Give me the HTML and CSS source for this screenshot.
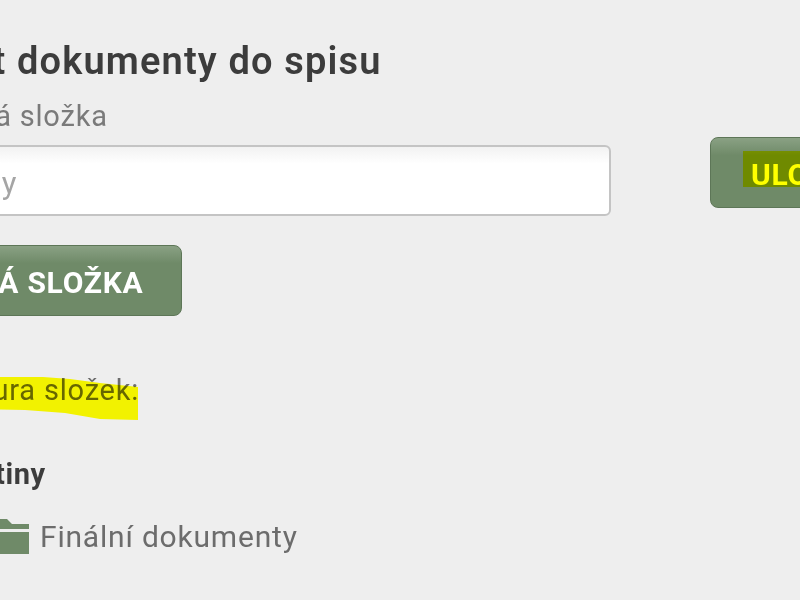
FILE: index.html
```html
<!DOCTYPE html>
<html lang="cs">
<head>
<meta charset="utf-8">
<title>Přidat dokumenty do spisu</title>
<link rel="stylesheet" href="styles.css">
</head>
<body>
<main class="page">
  <div class="row">
    <div class="col">
      <h1 class="title">Přidat dokumenty do spisu</h1>
      <label class="label">Vybraná složka</label>
      <div class="input">Listiny</div>
      <button class="btn btn-new">NOVÁ SLOŽKA</button>
      <p class="struct"><span class="struct-text">Struktura složek:</span><span class="marker"></span></p>
      <p class="group">Listiny</p>
      <div class="folder">
        <svg class="folder-icon" viewBox="0 0 44 35"><path d="M0 9V0h22l5 5h17v5H0z M0 13h44v22H0z" fill="#6f8a68"/></svg>
        <span class="folder-name">Finální dokumenty</span>
      </div>
    </div>
    <div class="side">
      <button class="btn btn-save">ULOŽIT<span class="btn-marker"></span></button>
    </div>
  </div>
</main>
</body>
</html>
```
FILE: styles.css
```css
html, body { margin: 0; height: 100%; overflow: hidden; background: #eeeeee; }
.page { width: 1100px; margin-left: -105px; padding-top: 38px; font-family: "Roboto", "Liberation Sans", sans-serif; filter: blur(0.6px); }
.row { display: flex; gap: 99px; }
.col { width: 716px; flex: none; }
.title { margin: 0; padding-left: 2px; font-size: 38px; line-height: 46px; font-weight: 600; letter-spacing: 1.15px; color: #3c3c3c; white-space: nowrap; }
.label { display: block; margin: 14px 0 0 6px; font-size: 29px; line-height: 36px; letter-spacing: 0.8px; color: #7a7a7a; white-space: nowrap; }
.input { box-sizing: border-box; height: 71px; margin-top: 11px; padding-left: 25px; font-size: 31px; line-height: 74px; letter-spacing: 0.8px; color: #a5a5a5; background: linear-gradient(#f2f2f2, #ffffff 25%); border: 2px solid #c4c4c4; border-radius: 6px; }
.btn { display: block; position: relative; box-sizing: border-box; height: 71px; padding: 4px 40px 0; font: 700 30px "Roboto", sans-serif; letter-spacing: 0.75px; color: #fff; white-space: nowrap; background: linear-gradient(#8aa184, #6f8a68 25%); border: 1px solid #5d7657; border-radius: 8px; }
.btn-new { margin-top: 29px; width: 287px; }
.btn-save { margin-top: 99px; width: 200px; text-align: left; }
.btn-marker { position: absolute; left: 32px; top: 13px; width: 168px; height: 36px; background: #ffff00; mix-blend-mode: multiply; }
.struct { position: relative; margin: 55px 0 0; font-size: 29px; line-height: 38px; letter-spacing: 0.8px; color: #6c6c6c; }
.struct-text { margin-left: 16px; }
.marker { position: absolute; left: 0; top: 0; width: 243px; height: 50px; background: #f2f200; mix-blend-mode: multiply; clip-path: polygon(0 6px, 148px 6px, 175px 8px, 205px 12px, 243px 16px, 243px 49px, 205px 48px, 170px 42px, 130px 39px, 0 37px); }
.group { margin: 47px 0 0 60px; font-size: 29px; line-height: 36px; font-weight: 700; letter-spacing: 0.6px; color: #3c3c3c; }
.folder { display: flex; align-items: center; gap: 11px; margin-top: 24px; padding-left: 90px; }
.folder-icon { width: 44px; height: 35px; }
.folder-name { padding-top: 2px; font-size: 30px; line-height: 38px; letter-spacing: 0.8px; color: #6c6c6c; white-space: nowrap; }
```
